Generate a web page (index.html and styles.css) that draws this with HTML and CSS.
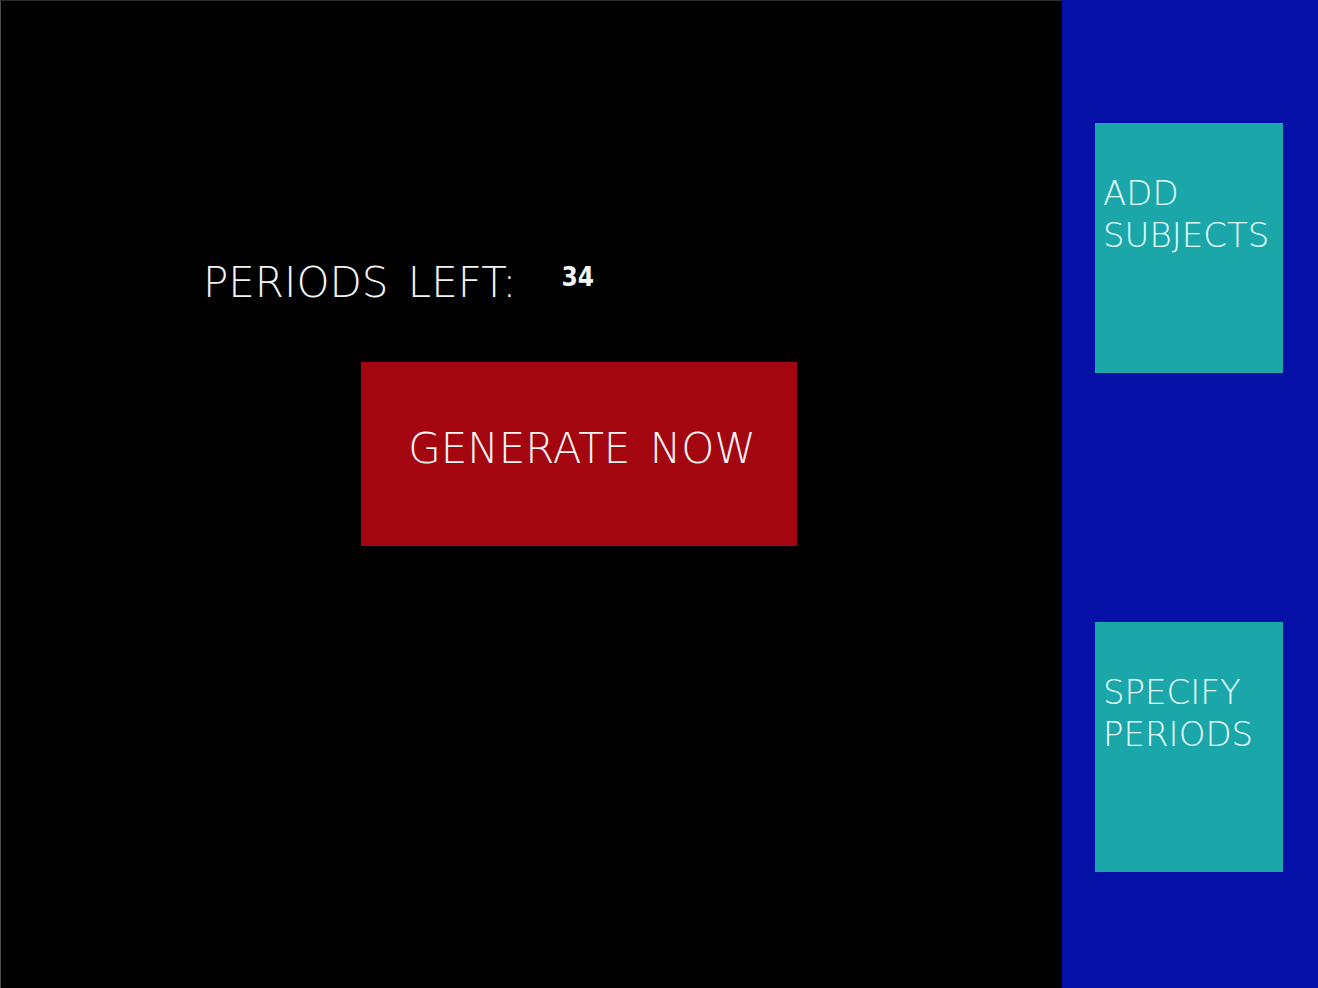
FILE: index.html
```html
<!DOCTYPE html>
<html lang="en">
<head>
<meta charset="utf-8">
<title>Timetable Generator</title>
<link rel="stylesheet" href="styles.css">
</head>
<body>
<div class="screen">
  <main class="main">
    <div class="periods-row">
      <span class="periods-label">PERIODS LEFT:</span>
      <span class="periods-count">34</span>
    </div>
    <div class="generate-btn">GENERATE NOW</div>
  </main>
  <aside class="sidebar">
    <div class="side-btn">ADD<br>SUBJECTS</div>
    <div class="side-btn">SPECIFY<br>PERIODS</div>
  </aside>
</div>
</body>
</html>
```
FILE: styles.css
```css
html, body {
  margin: 0;
  padding: 0;
  background: #000;
}
body {
  width: 1318px;
  height: 988px;
  overflow: hidden;
  font-family: "DejaVu Sans", "Liberation Sans", sans-serif;
  font-weight: 200;
  color: #f4f4f4;
}
.screen {
  display: flex;
  width: 1318px;
  height: 988px;
}
.main {
  width: 1062px;
  flex: none;
  background: #000;
  border-left: 1px solid #4a4a4a;
  border-top: 1px solid #2a2a2a;
  box-sizing: border-box;
  padding-top: 257px;
}
.periods-row {
  display: flex;
  align-items: flex-start;
  padding-left: 202px;
}
.periods-label {
  font-size: 42px;
  line-height: 50px;
  word-spacing: 6px;
}
.periods-count {
  font-family: "DejaVu Sans Condensed", "DejaVu Sans", sans-serif;
  font-stretch: condensed;
  font-size: 26px;
  line-height: 27px;
  font-weight: 700;
  margin-top: 6px;
  margin-left: 45px;
}
.generate-btn {
  margin-top: 54px;
  margin-left: 360px;
  width: 436px;
  height: 184px;
  box-sizing: border-box;
  padding-bottom: 12px;
  padding-left: 6px;
  background: #a4060f;
  display: flex;
  align-items: center;
  justify-content: center;
  font-size: 42px;
  word-spacing: 6px;
}
.sidebar {
  flex: 1;
  background: #0510a6;
  display: flex;
  flex-direction: column;
  gap: 249px;
  padding: 123px 0 0 33px;
}
.side-btn {
  width: 188px;
  height: 250px;
  box-sizing: border-box;
  background: #1ba6a9;
  color: #e6ffff;
  font-size: 34px;
  line-height: 42px;
  padding: 49px 0 0 8px;
}
```
